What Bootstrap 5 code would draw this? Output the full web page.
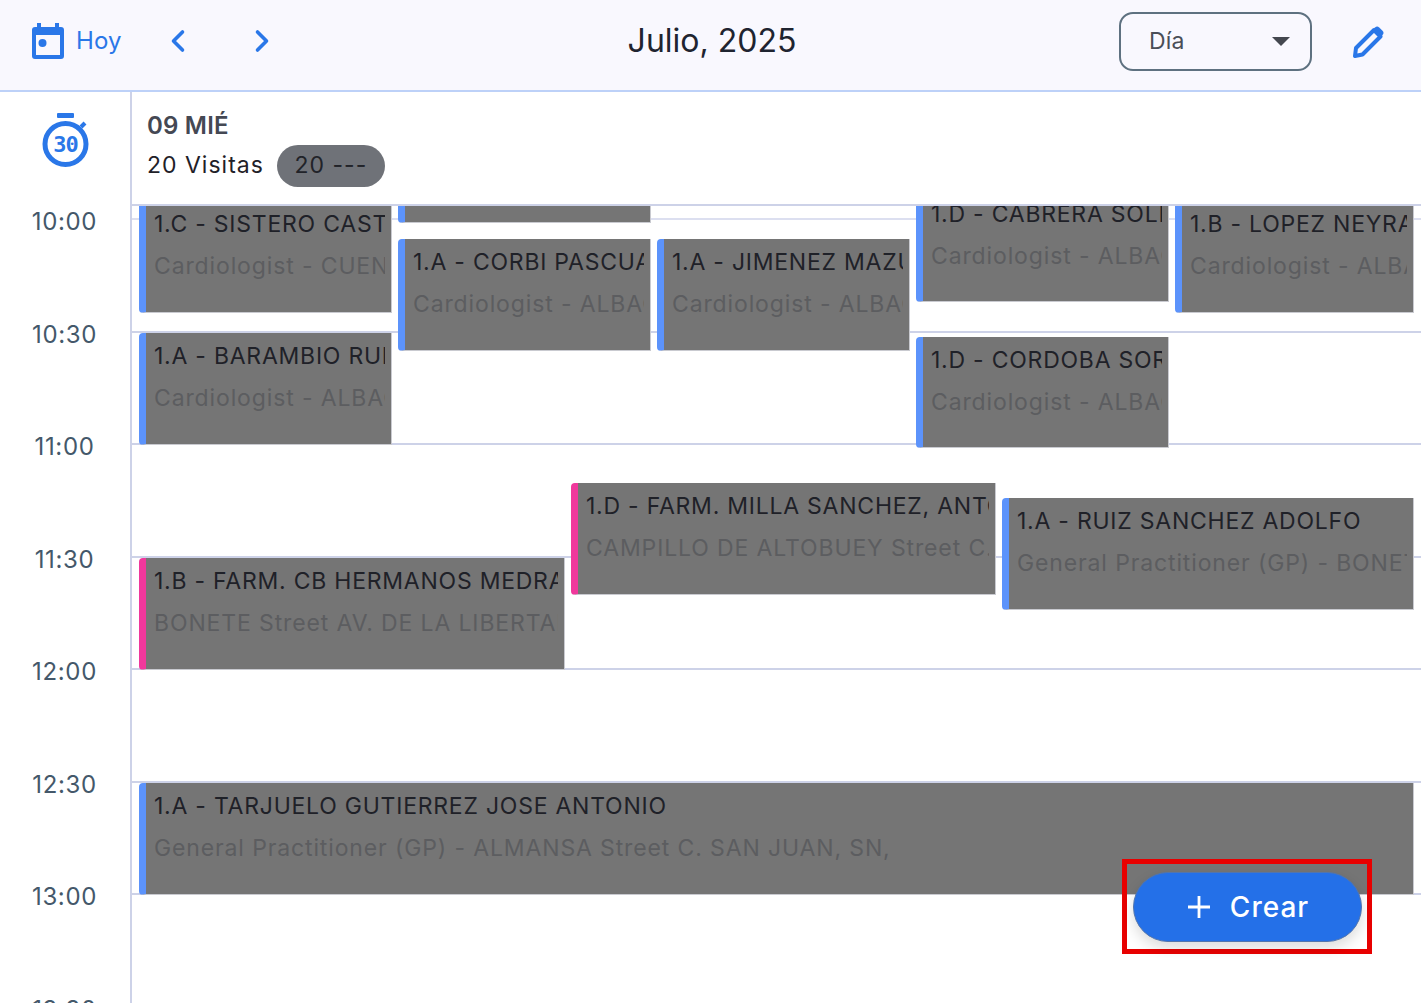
<!DOCTYPE html>
<html>
<head>
    <title>Agenda - Julio 2025</title>
    <link href="https://cdn.jsdelivr.net/npm/bootstrap@5.3.0/dist/css/bootstrap.min.css" rel="stylesheet">
    <style>
        html, body { height: 100%; overflow: hidden; }
        body { font-family: "Inter", "Liberation Sans", sans-serif; background: #fff; color: #1f2128; }
        .top-bar { height: 92px; background: #f9f8fe; border-bottom: 2px solid #bdd1f8; padding: 0 0 8px 31px; }
        .today-btn { width: 140px; color: #2a77e8; font-size: 24px; gap: 11px; letter-spacing: .1px; }
        .nav-chevrons { width: 100px; margin-left: -1px; justify-content: space-between; }
        .month-title { font-size: 32px; font-weight: 400; color: #1f2430; left: 3px; right: 0; top: 18px; line-height: 46px; pointer-events: none; }
        .view-select { width: 193px; height: 59px; border: 2px solid #5e7180; border-radius: 14px; font-size: 23px; letter-spacing: .2px; color: #4a4e57; padding: 0 20px 0 28px; background: transparent; margin-left: auto; }
        .view-caret { border-left: 9px solid transparent; border-right: 9px solid transparent; border-top: 9px solid #44474f; }
        .edit-icon { margin: 0 35px 0 41px; }
        .page-body { height: calc(100% - 92px); overflow: hidden; }
        .time-col { width: 132px; flex: none; border-right: 2px solid #cdd2e8; }
        .timer-cell { height: 113px; padding: 21px 0 0 3px; }
        .time-label { height: 112.5px; line-height: 34px; font-size: 24px; letter-spacing: .65px; color: #44586a; text-align: center; padding-right: 1px; }
        .day-col { min-width: 0; }
        .day-head { height: 114px; border-bottom: 2px solid #cdd2e8; padding: 18px 0 0 15px; }
        .day-name { font-size: 24px; font-weight: 600; letter-spacing: .2px; color: #444853; line-height: 32px; }
        .day-count { font-size: 23px; letter-spacing: 1px; gap: 13px; margin-top: 3px; }
        .count-text { padding-bottom: 1px; }
        .count-pill { background: #6f7278; color: #212329; width: 108px; height: 42px; border-radius: 21px; text-align: center; line-height: 40px; }
        .day-canvas { height: 800px; overflow: hidden; }
        .grid-first { height: 14px; border-bottom: 2px solid #dcdff0; }
        .grid-row { height: 112.5px; border-bottom: 2px solid #cdd2e8; }
        .visit-card { background: #757575; border-left: 7px solid #5c93fb; border-right: 1px solid #c9cad0; border-bottom: 1px solid #c9cad0; border-radius: 4px 0 0 4px; padding: 0 6px 0 8px; overflow: hidden; white-space: nowrap; font-size: 23px; }
        .visit-card.is-pharmacy { border-left-color: #f0389c; }
        .visit-title { color: #1f2128; line-height: 30px; margin-top: 8px; overflow: hidden; letter-spacing: .76px; }
        .visit-sub { color: #5c5d60; line-height: 30px; margin-top: 12px; overflow: hidden; letter-spacing: .87px; }
        .create-frame { right: 49px; bottom: 49px; width: 250px; height: 95px; border: 5px solid #e80000; padding: 8px 5px 0 6px; }
        .create-btn { width: 229px; height: 70px; border-radius: 35px; background: #2470e8; border: 1px solid #5275ad; color: #fff; font-size: 28px; font-weight: 500; letter-spacing: 1px; gap: 20px; padding-left: 14px; box-shadow: 0 6px 14px rgba(0,0,0,.14); }
    </style>
</head>
<body>
    <!-- Top bar -->
    <div class="top-bar d-flex align-items-center position-relative">
        <div class="today-btn d-flex align-items-center">
            <svg width="34" height="36" viewBox="0 0 34 36" fill="#2a77e8">
                <path d="M6 0h4v4h14V0h4v4h2a3 3 0 0 1 3 3v26a3 3 0 0 1-3 3H4a3 3 0 0 1-3-3V7a3 3 0 0 1 3-3h2V0zM5 12v20h24V12H5z"/>
                <circle cx="11.500" cy="20" r="4"/>
            </svg>
            <span>Hoy</span>
        </div>
        <div class="nav-chevrons d-flex">
            <svg width="16" height="24" viewBox="0 0 16 24" fill="none" stroke="#2a77e8" stroke-width="3.600" stroke-linecap="round" stroke-linejoin="round"><path d="M12.500 3 3.500 12l9 9"/></svg>
            <svg width="16" height="24" viewBox="0 0 16 24" fill="none" stroke="#2a77e8" stroke-width="3.600" stroke-linecap="round" stroke-linejoin="round"><path d="M3.500 3l9 9-9 9"/></svg>
        </div>
        <div class="month-title position-absolute text-center">Julio, 2025</div>
        <div class="view-select d-flex align-items-center justify-content-between">
            <span>Día</span>
            <span class="view-caret"></span>
        </div>
        <svg class="edit-icon" width="33" height="34" viewBox="0 0 33 34" fill="none">
            <path d="M3 24 21 6l6.500 6.500L9.500 30.500 2 32z" stroke="#2a77e8" stroke-width="4" stroke-linejoin="round"/>
            <path d="M22 3.500a3 3 0 0 1 4.200 0l3.300 3.300a3 3 0 0 1 0 4.200L26.500 14 19 6.500z" fill="#2a77e8"/>
        </svg>
    </div>

    <div class="page-body d-flex">
        <!-- Hours -->
        <div class="time-col">
            <div class="timer-cell d-flex justify-content-center">
                <svg width="50" height="56" viewBox="0 0 50 56">
                    <rect x="15" y="0" width="17" height="5" rx="1" fill="#2a77e8"/>
                    <circle cx="23.500" cy="31" r="20.500" fill="none" stroke="#2a77e8" stroke-width="5"/>
                    <path d="M39 14l4-4" stroke="#2a77e8" stroke-width="4"/>
                    <text x="23.500" y="39" text-anchor="middle" font-family="DejaVu Sans Mono, monospace" font-weight="700" font-size="22" letter-spacing="-1" fill="#2a77e8">30</text>
                </svg>
            </div>
            <div id="timeLabels"></div>
        </div>

        <!-- Day column -->
        <div class="day-col flex-grow-1">
            <div class="day-head">
                <div class="day-name">09 MIÉ</div>
                <div class="day-count d-flex align-items-center">
                    <span class="count-text">20 Visitas</span>
                    <span class="count-pill">20 ---</span>
                </div>
            </div>
            <div class="day-canvas position-relative" id="dayCanvas"></div>
        </div>
    </div>

    <div class="create-frame position-absolute">
        <button class="create-btn btn d-flex align-items-center justify-content-center">
            <svg width="22" height="22" viewBox="0 0 22 22" stroke="#fff" stroke-width="2.800"><path d="M11 0v22M0 11h22"/></svg>
            <span>Crear</span>
        </button>
    </div>

    <script>
        const hours = ['10:00', '10:30', '11:00', '11:30', '12:00', '12:30', '13:00', '13:30'];

        // x, y, right, bottom are page pixels
        const visits = [
            { x: 139, y: 201, r: 392, b: 313, t: '1.C - SISTERO CASTILLO', s: 'Cardiologist - CUENCA Street' },
            { x: 398, y: 112, r: 651, b: 223, t: '1.A - GARCIA', s: 'Cardiologist - ALBACETE' },
            { x: 398, y: 239, r: 651, b: 351, t: '1.A - CORBI PASCUAL', s: 'Cardiologist - ALBACETE' },
            { x: 657, y: 239, r: 910, b: 351, t: '1.A - JIMENEZ MAZUECOS', s: 'Cardiologist - ALBACETE' },
            { x: 916, y: 191, r: 1169, b: 302, t: '1.D - CABRERA SOLE', s: 'Cardiologist - ALBACETE' },
            { x: 1175, y: 201, r: 1414, b: 313, t: '1.B - LOPEZ NEYRA', s: 'Cardiologist - ALBACETE' },
            { x: 139, y: 333, r: 392, b: 445, t: '1.A - BARAMBIO RUIZ', s: 'Cardiologist - ALBACETE' },
            { x: 916, y: 337, r: 1169, b: 448, t: '1.D - CORDOBA SORIANO', s: 'Cardiologist - ALBACETE' },
            { x: 571, y: 483, r: 996, b: 595, t: '1.D - FARM. MILLA SANCHEZ, ANTONIO', s: 'CAMPILLO DE ALTOBUEY Street C. MAYOR', pharmacy: true },
            { x: 1002, y: 498, r: 1414, b: 610, t: '1.A - RUIZ SANCHEZ ADOLFO', s: 'General Practitioner (GP) - BONETE Street' },
            { x: 139, y: 558, r: 565, b: 670, t: '1.B - FARM. CB HERMANOS MEDRANO', s: 'BONETE Street AV. DE LA LIBERTAD, 12', pharmacy: true },
            { x: 139, y: 783, r: 1414, b: 895, t: '1.A - TARJUELO GUTIERREZ JOSE ANTONIO', s: 'General Practitioner (GP) - ALMANSA Street C. SAN JUAN, SN,' }
        ];

        function renderHours() {
            document.getElementById('timeLabels').innerHTML =
                hours.map(h => `<div class="time-label">${h}</div>`).join('');
        }

        function renderCanvas() {
            const canvasLeft = 132, canvasTop = 206;
            let html = '<div class="grid-first"></div>';
            for (let i = 0; i < 7; i++) html += '<div class="grid-row"></div>';
            visits.forEach(v => {
                const pos = `left:${v.x - canvasLeft}px;top:${v.y - canvasTop}px;width:${v.r - v.x}px;height:${v.b - v.y}px`;
                html += `
                    <div class="visit-card position-absolute${v.pharmacy ? ' is-pharmacy' : ''}" style="${pos}">
                        <div class="visit-title">${v.t}</div>
                        <div class="visit-sub">${v.s}</div>
                    </div>`;
            });
            document.getElementById('dayCanvas').innerHTML = html;
        }

        document.addEventListener('DOMContentLoaded', function() {
            renderHours();
            renderCanvas();
        });
    </script>
    <script src="https://cdn.jsdelivr.net/npm/bootstrap@5.3.0/dist/js/bootstrap.bundle.min.js"></script>
</body>
</html>
